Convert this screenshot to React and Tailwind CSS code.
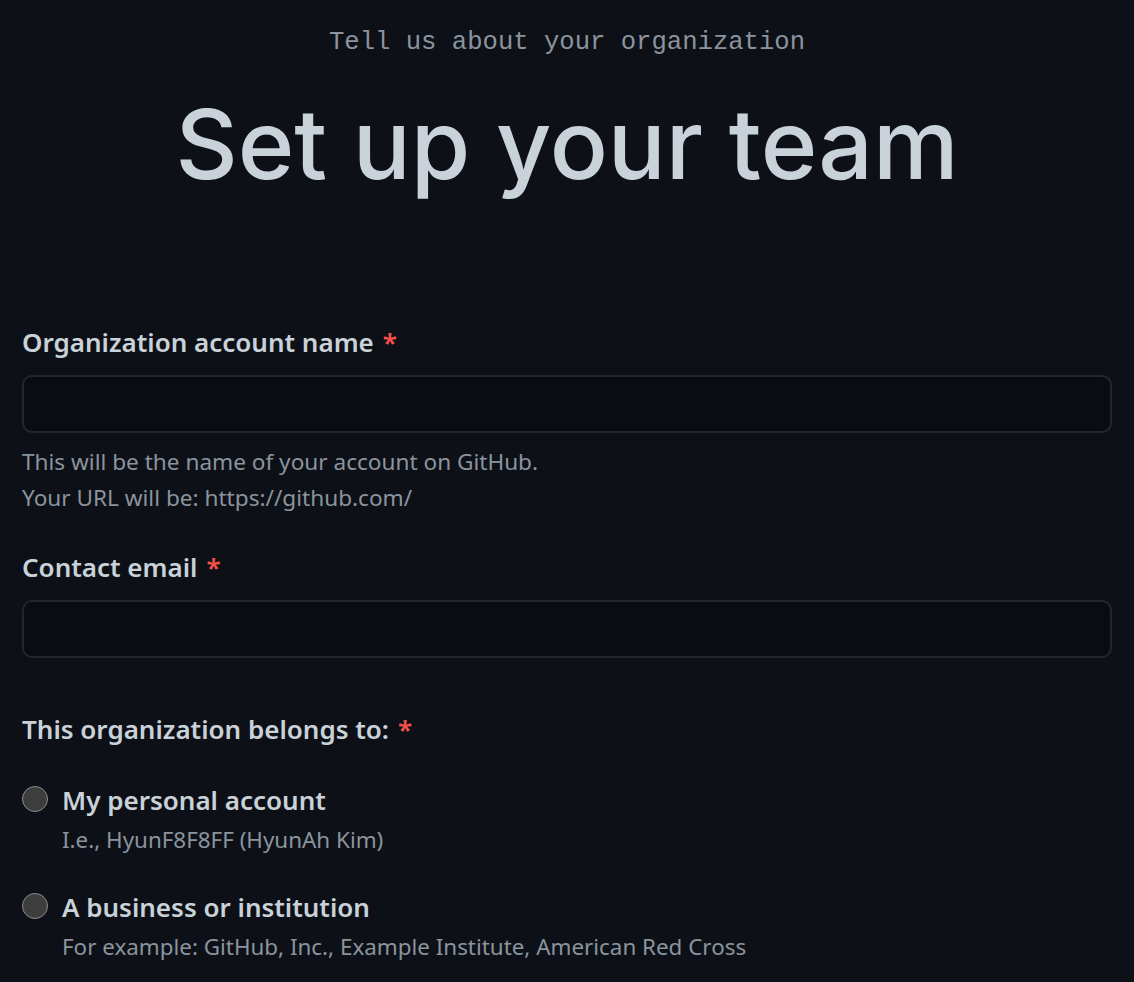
export default function App() {
  const label = "text-[26px] leading-[32px] font-semibold text-[#c9d1d9]";
  const star = "text-[#f85149] ml-[9px]";
  const help = "text-[22.6px] leading-[36px] text-[#8b949e]";
  const input = "block w-full h-[58px] rounded-[10px] border-2 border-[#22262d] bg-[#090c12] outline-none px-3 text-[#c9d1d9]";
  return (
    <div className="min-h-screen bg-[#0d1117] px-[22px] pt-[28px] pb-10" style={{ fontFamily: '"Noto Sans", "Open Sans", sans-serif' }}>
      <p className="text-center text-[25.6px] leading-[30px] text-[#8b949e]" style={{ fontFamily: '"Liberation Mono", monospace' }}>
        Tell us about your organization
      </p>
      <h1 className="mt-[26px] text-center text-[96.4px] leading-[120px] font-medium text-[#c9d1d9]" style={{ fontFamily: 'Inter, sans-serif' }}>
        Set up your team
      </h1>
      <div className="mt-[122px]">
        <label className={`block ${label}`}>
          Organization account name<span className={star}>*</span>
        </label>
        <div className="mt-[17px]">
          <input className={input} />
        </div>
        <div className="mt-[11px]">
          <p className={help}>This will be the name of your account on GitHub.</p>
          <p className={help}>Your URL will be: https://github.com/</p>
        </div>
      </div>
      <div className="mt-[35px]">
        <label className={`block ${label}`}>
          Contact email<span className={star}>*</span>
        </label>
        <div className="mt-[17px]">
          <input className={input} />
        </div>
      </div>
      <div className="mt-[55px]">
        <p className={label}>
          This organization belongs to:<span className={star}>*</span>
        </p>
        <div className="mt-[39px] flex items-start gap-[14px]">
          <span className="mt-[2px] w-[26px] h-[26px] rounded-full border border-[#8b8b8b] bg-[#3d3d3d] shrink-0" />
          <div>
            <p className="text-[26px] leading-[32px] font-semibold text-[#c9d1d9]">My personal account</p>
            <p className="mt-[6px] text-[22.4px] leading-[36px] text-[#8b949e]">I.e., HyunF8F8FF (HyunAh Kim)</p>
          </div>
        </div>
        <div className="mt-[33px] flex items-start gap-[14px]">
          <span className="mt-[2px] w-[26px] h-[26px] rounded-full border border-[#8b8b8b] bg-[#3d3d3d] shrink-0" />
          <div>
            <p className="text-[26px] leading-[32px] font-semibold text-[#c9d1d9]">A business or institution</p>
            <p className="mt-[6px] text-[22.4px] leading-[36px] text-[#8b949e]">For example: GitHub, Inc., Example Institute, American Red Cross</p>
          </div>
        </div>
      </div>
    </div>
  );
}
